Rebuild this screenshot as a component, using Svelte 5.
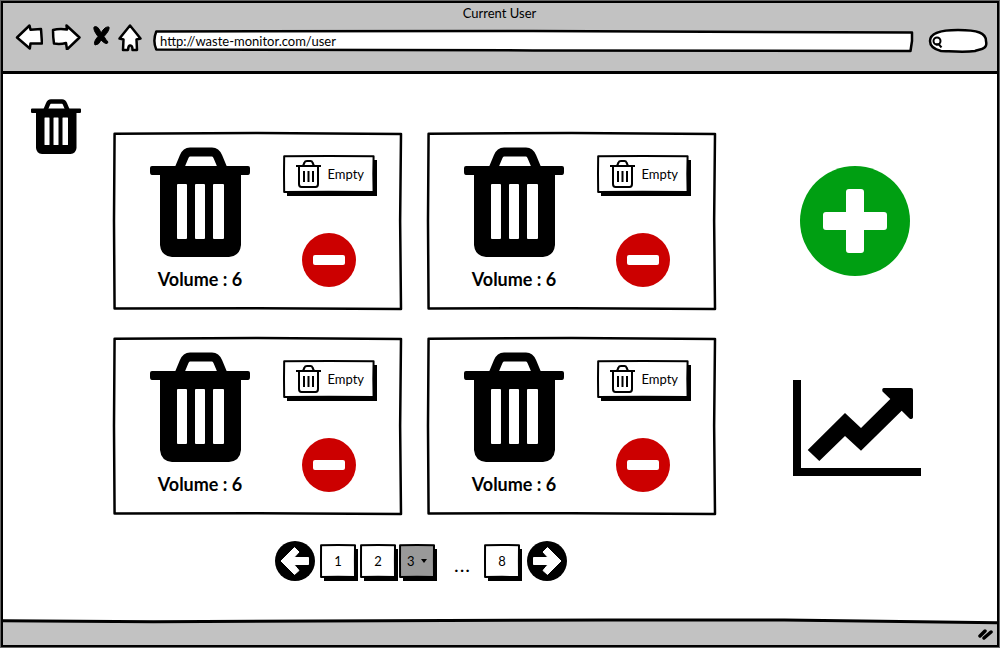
<script>
  const bins = [
    { id: 1, volume: 6 },
    { id: 2, volume: 6 },
    { id: 3, volume: 6 },
    { id: 4, volume: 6 },
  ];
  const title = 'Current User';
  let url = $state('http://waste-monitor.com/user');
  let query = $state('');
  let page = $state(3);
</script>

{#snippet trash()}
  <svg class="fill" viewBox="0 0 100 110" aria-hidden="true">
    <path d="M29 22 34 10Q36 5 40 5H62Q66 5 68 10L73 22" fill="none" stroke="#000" stroke-width="9" />
    <path
      fill-rule="evenodd"
      d="M2 19H98Q100 19 100 21V25Q100 28 98 28H91V98Q90 109 79 110H22Q11 109 10 98V28H2Q0 28 0 25V21Q0 19 2 19ZM28 37Q27 37 27 38V91Q27 92 28 92H36Q37 92 37 91V38Q37 37 36 37ZM46 37Q45 37 45 38V91Q45 92 46 92H54Q55 92 55 91V38Q55 37 54 37ZM64 37Q63 37 63 38V91Q63 92 64 92H73Q74 92 74 91V38Q74 37 73 37Z"
    />
  </svg>
{/snippet}

{#snippet sketchBox()}
  <svg class="sketch box" viewBox="0 0 100 100" preserveAspectRatio="none" aria-hidden="true">
    <path d="M.2 .4 50 0 100 .5 99.700 50 100 100 50 99.600 .2 99.700 0 50Z" vector-effect="non-scaling-stroke" />
  </svg>
{/snippet}

{#snippet arrow(flip)}
  <svg class="fill" viewBox="-20 -20 40 40" aria-hidden="true">
    <circle r="20" />
    <g transform={flip ? 'scale(-1 1)' : undefined}>
      <path d="M-14 0-.5-13.500 4-9-1-3.500H13.500V3.500H-1L4 9.500-.5 13.500Z" fill="#fff" stroke="#fff" stroke-linejoin="round" />
    </g>
  </svg>
{/snippet}

<div class="window">
  <header>
    <h1>{title}</h1>
    <div class="toolbar">
      <nav class="browser" aria-label="Browser">
        <button class="b-arrow" aria-label="Back">
          <svg width="28" height="26" viewBox="0 0 28 26"><path d="M2 13.500 14.500 1.500 15.500 5.800 26 5 27 19.500 15.500 19.500 14.800 24.500Z" /></svg>
        </button>
        <button class="b-arrow" aria-label="Forward">
          <svg width="30" height="26" viewBox="0 0 30 26"><path d="M2 6Q8 4.500 16 5.500L15.500 1.500 28.500 13.500 16 25.500 15 19Q9 20.500 3 19.500Q2 13 2 6Z" /></svg>
        </button>
        <button class="b-stop" aria-label="Stop">
          <svg width="17" height="26" viewBox="0 0 17 26"><path class="ink" d="M1 3Q5 1 8 9 12 2 16 3 17 6 11 12.500 13 16 15 18 14 22 8 16 6 21 2 21 0 18 5 12.500 0 6 1 3Z" /></svg>
        </button>
        <button class="b-home" aria-label="Home">
          <svg width="24" height="28" viewBox="0 0 24 28"><path d="M12 1.500 22.500 14.500 18.500 15.500 19 26H14.500Q14.500 21 12 21.500 10.500 21 10 26H5L5.500 15.500 1.500 14.500Z" /></svg>
        </button>
      </nav>
      <div class="fields">
        <label class="address">
          <svg class="sketch box" viewBox="0 0 100 100" preserveAspectRatio="none" aria-hidden="true">
            <path d="M.3 2 50 0 100 8 100 50 99.800 100 50 97 .3 93Q-.2 50 .3 2Z" vector-effect="non-scaling-stroke" />
          </svg>
          <input type="text" aria-label="Address" bind:value={url} />
        </label>
        <label class="search">
          <svg class="sketch box" viewBox="0 0 60 24" preserveAspectRatio="none" aria-hidden="true">
            <path d="M2 12C2 4 13 1 30 1 50 1 58 4 58 12 60 20 53 20 47 22 35 24 20 22 13 22 5 20 2 17 2 12Z" vector-effect="non-scaling-stroke" />
          </svg>
          <svg class="lens" width="11" height="12" viewBox="0 0 11 12" aria-hidden="true">
            <circle cx="5" cy="5" r="3.500" /><path d="M4 8.500H7L9.500 11.500" />
          </svg>
          <input type="search" aria-label="Search" bind:value={query} />
        </label>
      </div>
    </div>
  </header>

  <main>
    <a class="logo" href="#home" aria-label="Waste monitor">{@render trash()}</a>

    <section class="content" aria-label="Bins">
      <div class="bins">
        {#each bins as bin (bin.id)}
          <article>
            {@render sketchBox()}
            <div class="status">
              <div class="can">{@render trash()}</div>
              <p>Volume : {bin.volume}</p>
            </div>
            <div class="controls">
              <button class="raised empty">
                {@render sketchBox()}
                <svg width="25" height="28" viewBox="0 0 25 28" aria-hidden="true">
                  <g fill="none" stroke="#000" stroke-width="2" stroke-linejoin="round">
                    <path d="M0 6H25M7 6 8.500 2.500Q9 1 11 1H14.500Q16 1 16.500 2.500L18 6M3 6V24Q3 27 5.500 27H19.500Q22 27 22 24V6M8 11V22M12.500 11V22M17 11V22" />
                  </g>
                </svg>
                Empty
              </button>
              <button class="remove" aria-label="Remove bin">
                <svg class="fill" viewBox="0 0 54 54"><circle cx="27" cy="27" r="27" fill="#c00" /><rect x="11" y="22" width="32" height="10" rx="2" fill="#fff" /></svg>
              </button>
            </div>
          </article>
        {/each}
      </div>

      <nav class="pages" aria-label="Pages">
        <button class="step" aria-label="Previous page">{@render arrow(false)}</button>
        <button class="raised num">{@render sketchBox()}1</button>
        <button class="raised num">{@render sketchBox()}2</button>
        <label class="raised num current">
          {@render sketchBox()}
          <select aria-label="Page" bind:value={page}>
            {#each [3, 4, 5, 6, 7] as n}<option value={n}>{n}</option>{/each}
          </select>
          <svg class="caret" width="6" height="4" viewBox="0 0 6 4" aria-hidden="true"><path d="M0 0H6L3 4Z" /></svg>
        </label>
        <span class="dots">...</span>
        <button class="raised num">{@render sketchBox()}8</button>
        <button class="step" aria-label="Next page">{@render arrow(true)}</button>
      </nav>
    </section>

    <aside>
      <button class="add" aria-label="Add bin">
        <svg class="fill" viewBox="0 0 110 110">
          <circle cx="55" cy="55" r="55" fill="#009f12" />
          <path d="M49 23H61Q64 23 64 26V46H84Q87 46 87 49V61Q87 64 84 64H64V84Q64 87 61 87H49Q46 87 46 84V64H26Q23 64 23 61V49Q23 46 26 46H46V26Q46 23 49 23Z" fill="#fff" />
        </svg>
      </button>
      <button class="chart" aria-label="Statistics">
        <svg class="fill" viewBox="0 0 128 96">
          <path d="M0 0H8V88H128V96H0ZM14.700 70 52 33 68 48 97.300 19 89.500 11.500Q88.500 8 91 8H118Q120 8 120 10V37.500Q119 40 116.500 38.500L108.700 30.700 68 70.700 52 56 26.300 81Z" />
        </svg>
      </button>
    </aside>
  </main>

  <footer>
    <svg class="edge" viewBox="0 0 992 28" preserveAspectRatio="none" aria-hidden="true">
      <path d="M0 2 150 3 600 1 780 1 992 4V28H0Z" fill="#c2c2c2" />
      <path d="M0 2 150 3 600 1 780 1 992 4" fill="none" stroke="#000" stroke-width="3" vector-effect="non-scaling-stroke" />
    </svg>
    <svg class="grip" width="16" height="14" viewBox="0 0 16 14" aria-hidden="true">
      <path d="M2 9 7 4M6 11 13 5" fill="none" stroke="#000" stroke-width="3.500" stroke-linecap="round" />
    </svg>
  </footer>
</div>

<style>
  :global(body) {
    margin: 0;
    background: #fff;
  }
  .window {
    box-sizing: border-box;
    min-height: 100vh;
    display: flex;
    flex-direction: column;
    border: 3px solid #000;
    outline: 1px solid #666;
    outline-offset: -1px;
    color: #000;
    font: 13px/18px Lato, 'Noto Sans', sans-serif;
  }
  button,
  input,
  select {
    font: inherit;
    color: inherit;
    border: 0;
    padding: 0;
    background: none;
  }
  button {
    cursor: pointer;
  }
  svg {
    display: block;
  }
  .fill {
    width: 100%;
    height: auto;
    overflow: visible;
  }
  .sketch {
    position: absolute;
    inset: 0;
    width: 100%;
    height: 100%;
    overflow: visible;
    z-index: -1;
  }
  .box path {
    fill: #fff;
    stroke: #000;
    stroke-width: 2px;
    stroke-linejoin: round;
  }
  header {
    background: #c2c2c2;
    border-bottom: 3px solid #000;
    padding: 1px 9px 18px 12px;
  }
  h1 {
    margin: 0;
    font-size: 13px;
    font-weight: 400;
    text-align: center;
    padding-right: 4px;
  }
  .toolbar {
    display: flex;
    align-items: flex-start;
    gap: 12px;
  }
  .browser {
    display: flex;
    align-items: flex-start;
    padding-top: 2px;
  }
  .browser path {
    fill: #fff;
    stroke: #000;
    stroke-width: 2.5px;
    stroke-linejoin: round;
  }
  .browser .ink {
    fill: #000;
    stroke: #000;
    stroke-width: 1px;
  }
  .b-arrow {
    margin-right: 8px;
  }
  .b-stop {
    margin: 0 8px 0 4px;
  }
  .fields {
    flex: 1;
    display: flex;
    align-items: center;
    gap: 16px;
    padding-top: 7px;
  }
  label {
    position: relative;
    isolation: isolate;
    display: flex;
    align-items: center;
  }
  .address {
    flex: 1;
    height: 20px;
  }
  .address .box path,
  .search .box path,
  article > :global(.sketch path) {
    stroke-width: 2.5px;
  }
  .address input {
    width: 100%;
    padding: 0 6px;
    outline: none;
  }
  .search {
    width: 60px;
    height: 24px;
  }
  .search input {
    width: 36px;
    outline: none;
    appearance: none;
  }
  .lens {
    margin: 2px 4px 0 4px;
    fill: none;
    stroke: #000;
    stroke-width: 2px;
  }
  main {
    flex: 1;
    display: grid;
    grid-template-columns: 110px minmax(0, 603fr) minmax(0, 281fr);
    align-items: start;
  }
  .logo {
    width: 50px;
    margin: 25px 0 0 28px;
  }
  .content {
    padding: 59px 0 36px;
  }
  .bins {
    display: grid;
    grid-template-columns: 1fr 1fr;
    gap: 29px 27px;
    padding: 0 1px;
  }
  article {
    position: relative;
    isolation: isolate;
    display: flex;
    justify-content: space-between;
    padding: 14px 27px 18px 36px;
  }
  .can {
    width: 100px;
  }
  .status p {
    margin: 10px 0 0;
    font-size: 18px;
    line-height: 24px;
    font-weight: 700;
    text-align: center;
  }
  .controls {
    display: flex;
    flex-direction: column;
    align-items: center;
    gap: 41px;
    padding-top: 9px;
  }
  .raised {
    position: relative;
    isolation: isolate;
    display: flex;
    align-items: center;
    justify-content: center;
    box-shadow: 3px 4px 0 0 #000;
  }
  .empty {
    gap: 6px;
    height: 36px;
    padding: 0 10px 0 12px;
  }
  .remove {
    width: 54px;
  }
  .pages {
    display: flex;
    align-items: center;
    justify-content: center;
    padding: 27px 0 0 13px;
  }
  .step {
    width: 40px;
  }
  .num {
    width: 34px;
    height: 32px;
    margin: 0 0 0 6px;
  }
  .num + .step {
    margin-left: 8px;
  }
  .current {
    margin-left: 5px;
    gap: 6px;
  }
  .current > :global(.sketch path) {
    fill: #999;
  }
  .current select {
    appearance: none;
    width: 8px;
    outline: none;
  }
  .caret {
    pointer-events: none;
  }
  .dots {
    padding: 6px 8px 0 20px;
    font-size: 20px;
    line-height: 24px;
    letter-spacing: 1px;
  }
  aside {
    display: flex;
    flex-direction: column;
    align-items: center;
    gap: 104px;
    padding-top: 92px;
  }
  .add {
    width: 110px;
    margin-right: 4px;
  }
  .chart {
    width: 128px;
  }
  footer {
    position: relative;
    isolation: isolate;
    display: flex;
    justify-content: flex-end;
    padding: 8px 3px 4px;
  }
  .edge {
    position: absolute;
    inset: 0;
    width: 100%;
    height: 100%;
    z-index: -1;
    overflow: visible;
  }
</style>
